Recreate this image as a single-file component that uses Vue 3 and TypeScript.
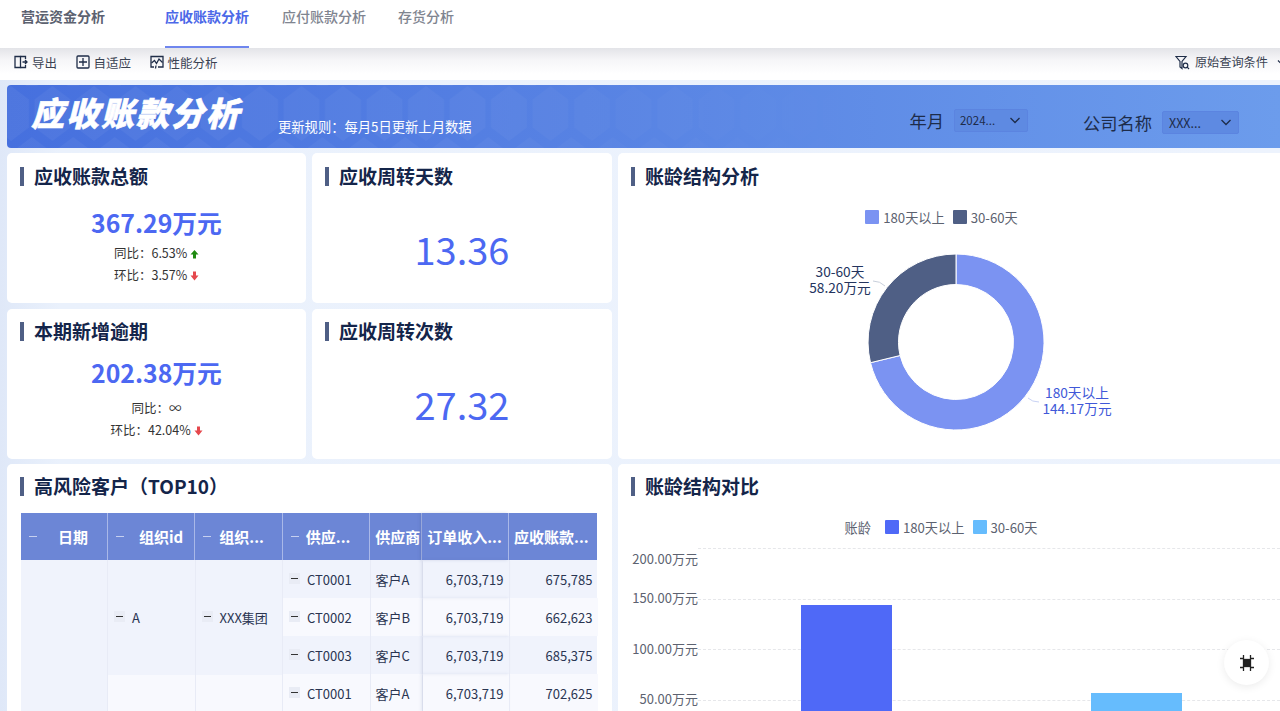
<script setup lang="ts">
interface Row { id: number; sup: string; cust: string; rev: string; ar: string; alt: boolean }
const rows: Row[] = [
  { id: 0, sup: 'CT0001', cust: '客户A', rev: '6,703,719', ar: '675,785', alt: false },
  { id: 1, sup: 'CT0002', cust: '客户B', rev: '6,703,719', ar: '662,623', alt: true },
  { id: 2, sup: 'CT0003', cust: '客户C', rev: '6,703,719', ar: '685,375', alt: false },
  { id: 3, sup: 'CT0001', cust: '客户A', rev: '6,703,719', ar: '702,625', alt: true },
]
const heads = ['组织id', '组织...', '供应...']
const ticks = ['200.00万元', '150.00万元', '100.00万元', '50.00万元']
</script>

<template>
  <div class="page">
    <header class="nav">
      <div class="brand">营运资金分析</div>
      <div class="tab active">应收账款分析</div>
      <div class="tab">应付账款分析</div>
      <div class="tab">存货分析</div>
    </header>

    <div class="toolbar">
      <div class="tool">
        <svg width="14" height="14" viewBox="0 0 14 14" fill="none" stroke="#1f2d48" stroke-width="1.3"><path d="M1 1.500h5.500v11H1z"/><path d="M6.500 1.500h5v2.500M6.500 12.500h5V10"/><path d="M8.500 7H13M11 5l2 2-2 2"/></svg>
        <span>导出</span>
      </div>
      <div class="tool">
        <svg width="14" height="14" viewBox="0 0 14 14" fill="none" stroke="#1f2d48" stroke-width="1.3"><rect x="1" y="1" width="12" height="12" rx="1"/><path d="M7 3v8M3 7h8"/></svg>
        <span>自适应</span>
      </div>
      <div class="tool">
        <svg width="14" height="14" viewBox="0 0 14 14" fill="none" stroke="#1f2d48" stroke-width="1.3"><path d="M4 12H1V1.500h12V12H8"/><path d="M1.500 8l3-2.500 2 3 2.500-4.500 3.500 3.500M6 10.500l-.5 3"/></svg>
        <span>性能分析</span>
      </div>
      <div class="tool query">
        <svg width="15" height="15" viewBox="0 0 15 15" fill="none" stroke="#1f2d48" stroke-width="1.200"><path d="M1 1.500h10L7 6.500v7L5 12V6.500z"/><circle cx="10.500" cy="10.500" r="2.300"/><path d="M12.200 12.200l1.800 1.800"/></svg>
        <span>原始查询条件</span>
        <svg class="more" width="10" height="10" viewBox="0 0 10 10" fill="none" stroke="#1f2d48" stroke-width="1.200"><path d="M2 3.500l3 3 3-3"/></svg>
      </div>
    </div>

    <main class="board">
      <section class="banner">
        <svg class="hexes" width="1273" height="63" viewBox="0 0 1273 63" aria-hidden="true">
          <defs>
            <pattern id="hex" width="41.500" height="102" patternUnits="userSpaceOnUse" x="-16.750" y="1">
              <path d="M20.750 0l18 13.500v28l-18 13.500-18-13.500v-28z" fill="#fff"/>
              <path d="M0 51l18 13.500v28L0 106l-18-13.500v-28zM41.500 51l18 13.500v28L41.500 106l-18-13.500v-28z" fill="#fff"/>
            </pattern>
            <linearGradient id="fade" x1="0" x2="1" y1="0" y2="0">
              <stop offset="0" stop-color="#fff" stop-opacity="0.05"/>
              <stop offset="0.55" stop-color="#fff" stop-opacity="0.035"/>
              <stop offset="1" stop-color="#fff" stop-opacity="0"/>
            </linearGradient>
            <mask id="fadeMask">
              <rect width="900" height="63" fill="url(#fade)"/>
            </mask>
          </defs>
          <rect width="900" height="63" fill="url(#hex)" mask="url(#fadeMask)"/>
        </svg>
        <div class="banner-title">应收账款分析</div>
        <div class="banner-rule">更新规则：每月5日更新上月数据</div>
        <div class="filters">
          <label class="filter first">
            <span class="filter-label">年月</span>
            <span class="select small"><span>2024...</span>
              <svg width="12" height="12" viewBox="0 0 12 12" fill="none" stroke="#1d2c4a" stroke-width="1.300"><path d="M1.500 4L6 8.500 10.500 4"/></svg>
            </span>
          </label>
          <label class="filter second">
            <span class="filter-label">公司名称</span>
            <span class="select"><span>XXX...</span>
              <svg width="12" height="12" viewBox="0 0 12 12" fill="none" stroke="#1d2c4a" stroke-width="1.300"><path d="M1.500 4L6 8.500 10.500 4"/></svg>
            </span>
          </label>
        </div>
      </section>

      <section class="card kpi a1">
        <h2 class="title">应收账款总额</h2>
        <div class="amount first">367.29万元</div>
        <div class="delta d1">同比：6.53%
          <svg class="arrow" width="9" height="10" viewBox="0 0 9 10"><path d="M4.500 1l4 4.500H6v4H3v-4H.5z" fill="#1f8a10"/></svg>
        </div>
        <div class="delta">环比：3.57%
          <svg class="arrow" width="9" height="10" viewBox="0 0 9 10"><path d="M4.500 9.500l4-5H6v-4H3v4H.5z" fill="#e5484d"/></svg>
        </div>
      </section>

      <section class="card kpi a2">
        <h2 class="title">应收周转天数</h2>
        <div class="bignum">13.36</div>
      </section>

      <section class="card pie">
        <h2 class="title">账龄结构分析</h2>
        <div class="legend pie-legend">
          <span class="swatch sw-pie1"></span><span>180天以上</span>
          <span class="swatch s2 sw-pie2"></span><span>30-60天</span>
        </div>
        <svg class="donut" width="662" height="260" viewBox="0 0 662 260">
          <g transform="translate(338 135)">
            <path d="M0 -88A88 88 0 1 1 -85.500 20.700L-55.900 13.500A57.500 57.500 0 1 0 0 -57.500Z" fill="#7b93f2" stroke="#fff" stroke-width="1"/>
            <path d="M-85.500 20.700A88 88 0 0 1 0 -88L0 -57.500A57.500 57.500 0 0 0 -55.900 13.500Z" fill="#4f5f85" stroke="#fff" stroke-width="1"/>
          </g>
          <path d="M255 74q7 0 12 5" fill="none" stroke="#c8cfdb"/>
          <path d="M410 191q4 4 11 4" fill="none" stroke="#c8d2f4"/>
          <text class="pl dark" x="222" y="70" text-anchor="middle">30-60天</text>
          <text class="pl dark" x="222" y="86" text-anchor="middle">58.20万元</text>
          <text class="pl blue" x="459" y="191" text-anchor="middle">180天以上</text>
          <text class="pl blue" x="459" y="207" text-anchor="middle">144.17万元</text>
        </svg>
      </section>

      <section class="card kpi b1">
        <h2 class="title">本期新增逾期</h2>
        <div class="amount">202.38万元</div>
        <div class="delta d2">同比：∞</div>
        <div class="delta">环比：42.04%
          <svg class="arrow" width="9" height="10" viewBox="0 0 9 10"><path d="M4.500 9.500l4-5H6v-4H3v4H.5z" fill="#e5484d"/></svg>
        </div>
      </section>

      <section class="card kpi b2">
        <h2 class="title">应收周转次数</h2>
        <div class="bignum">27.32</div>
      </section>

      <section class="card risk">
        <h2 class="title">高风险客户（TOP10）</h2>
        <div class="tbl">
          <div class="thead">
            <div class="th c1"><i class="fold f1"></i><b>日期</b></div>
            <div v-for="(h, i) in heads" :key="h" class="th" :class="'c' + (i + 2)"><i class="fold" :class="'f' + (i + 2)"></i><b>{{ h }}</b></div>
            <div class="th c5 plain"><b>供应商</b></div>
            <div class="th c6 plain"><b>订单收入...</b></div>
            <div class="th c7 plain"><b>应收账款...</b></div>
          </div>
          <div class="tbody">
            <div class="merged date"></div>
            <div class="merged org"><span class="mini"><i></i></span>A</div>
            <div class="merged group"><span class="mini"><i></i></span>XXX集团</div>
            <div class="merged org lower"></div>
            <div class="merged group lower"></div>
            <div class="cols">
              <div v-for="r in rows" :key="r.id" class="row" :class="{ alt: r.alt }">
                <div class="td c4"><span class="mini"><i></i></span>{{ r.sup }}</div>
                <div class="td c5">{{ r.cust }}</div>
                <div class="td c6 num">{{ r.rev }}</div>
                <div class="td c7 num">{{ r.ar }}</div>
              </div>
            </div>
          </div>
        </div>
      </section>

      <section class="card compare">
        <h2 class="title">账龄结构对比</h2>
        <div class="legend bar-legend">
          <span class="legend-name">账龄</span>
          <span class="swatch sw-bar1"></span><span>180天以上</span>
          <span class="swatch s3 sw-bar2"></span><span>30-60天</span>
        </div>
        <div class="plot">
          <div class="axis">
            <div v-for="t in ticks" :key="t" class="tick">{{ t }}</div>
          </div>
          <div class="area">
            <div v-for="n in 4" :key="n" class="gridline"></div>
            <div class="bar bar1"></div>
            <div class="bar bar2"></div>
          </div>
        </div>
      </section>
    </main>

    <button class="fab" type="button" aria-label="全屏">
      <svg width="20" height="20" viewBox="0 0 20 20" fill="none" stroke="#222" stroke-width="1.300"><rect x="6.500" y="6.500" width="7" height="7" fill="#222"/><path d="M6.500 2v3.500H3M13.500 2v3.500H17M6.500 18v-3.500H3M13.500 18v-3.500H17"/></svg>
    </button>
  </div>
</template>

<style>
html, body { margin: 0; overflow: hidden; background: #fff; }
</style>

<style scoped>
.page { position: relative; width: 1280px; height: 711px; overflow: hidden; font-family: "Noto Sans CJK SC", "Noto Sans", sans-serif; color: #1a2a4a; background: #fff; }
.nav { height: 48px; display: flex; background: #fff; }
.brand { width: 165px; padding-left: 21px; box-sizing: border-box; font-size: 14px; font-weight: 700; color: #5c6270; line-height: 32px; }
.tab { font-size: 14px; font-weight: 500; color: #7f8590; line-height: 32px; margin-right: 32px; height: 48px; box-sizing: border-box; }
.tab.active { color: #4c68e8; font-weight: 700; border-bottom: 2px solid #6f86ee; margin-right: 33px; }
.toolbar { height: 32px; box-sizing: border-box; padding: 0 0 4px 14px; display: flex; align-items: center; gap: 18.500px; font-size: 12.500px; color: #3a4252; background: linear-gradient(#e3e4e8 0, #f6f6f8 12px, #fff 26px); }
.tool { display: flex; align-items: center; gap: 4px; }
.query { margin-left: auto; margin-right: -6px; font-size: 12.200px; gap: 5px; }
.more { margin-left: 3px; }
.board { display: grid; grid-template-columns: 299px 300px 662px; grid-template-rows: 63px 150px 151px 260px; gap: 5px 6px; padding: 5px 0 0 7px; height: 631px; box-sizing: border-box; background: linear-gradient(90deg, #dfe8f8 0, #eaf1fc 60px, #edf3fd 100%); }
.banner { grid-column: 1 / -1; position: relative; display: flex; width: 1273px; overflow: hidden; border-radius: 4px 0 0 4px; background: linear-gradient(90deg, #4670de 0, #5782e3 45%, #6c9cec 100%); }
.hexes { position: absolute; left: 0; top: 0; }
.banner-title { position: relative; width: 271px; padding: 6px 0 0 24px; box-sizing: border-box; color: #fff; font-size: 33px; line-height: 42px; font-weight: 900; font-style: italic; letter-spacing: 2px; white-space: nowrap; -webkit-text-stroke: 0.6px #fff; }
.banner-rule { position: relative; font-size: 13.300px; color: #fff; padding-top: 32px; line-height: 20px; }
.filters { position: relative; margin-left: auto; display: flex; }
.filter { display: flex; align-items: center; gap: 10px; }
.filter.first { height: 70px; margin-right: 55px; }
.filter.second { height: 74px; }
.filter-label { font-size: 17.250px; color: #1d2c4a; }
.select { display: flex; align-items: center; justify-content: space-between; width: 77px; height: 23px; box-sizing: border-box; padding: 0 6px; border: 1px solid #5b84e0; background: #5e8ae2; border-radius: 2px; font-size: 12.500px; color: #1d2c4a; margin-right: 41px; }
.select.small { font-size: 11.500px; width: 74px; margin-right: 0; padding-left: 5px; }
.card { background: #fff; border-radius: 5px; overflow: hidden; }
.title { margin: 0; display: flex; align-items: center; height: 46px; padding-left: 14px; font-size: 19px; font-weight: 700; color: #14254a; line-height: 46px; }
.title::before { content: ""; width: 4px; height: 19px; background: #4f5f85; margin-right: 10px; margin-left: -1px; }
.kpi { text-align: center; }
.amount { font-size: 24.800px; font-weight: 700; color: #4c68f2; line-height: 32px; margin-top: 3px; }
.amount.first { margin-top: 7px; }
.delta { font-size: 12.500px; color: #333; line-height: 22px; height: 22px; }
.d1 { margin-top: 4px; }
.d2 { margin-top: 9px; }
.arrow { vertical-align: -1px; }
.bignum { font-size: 38px; color: #4c68f2; line-height: 50px; margin-top: 25px; }
.a1 { grid-column: 1; grid-row: 2; }
.a2 { grid-column: 2; grid-row: 2; }
.b1 { grid-column: 1; grid-row: 3; margin-top: 1px; }
.b2 { grid-column: 2; grid-row: 3; margin-top: 1px; }
.b1 .title, .b2 .title, .risk .title, .compare .title { height: 44px; }
.b2 .bignum { margin-top: 26px; }
.pie { grid-column: 3; grid-row: 2 / 4; border-radius: 5px 0 0 5px; }
.risk { grid-column: 1 / 3; grid-row: 4; }
.compare { grid-column: 3; grid-row: 4; border-radius: 5px 0 0 5px; }
.legend { display: flex; align-items: center; justify-content: center; font-size: 13.200px; color: #5c6270; }
.swatch { width: 14px; height: 14px; border-radius: 1px; margin-right: 4px; }
.sw-pie1 { background: #7b93f2; }
.sw-pie2 { background: #4f5f85; }
.sw-bar1 { background: #4f69f7; }
.sw-bar2 { background: #66bcfd; }
.pie-legend { height: 20px; margin-top: 8px; padding-right: 15px; }
.s2 { margin-left: 8px; }
.s3 { margin-left: 9px; margin-right: 3px; }
.donut { display: block; margin-top: -20px; }
.pl { font-size: 13.700px; font-family: "Noto Sans CJK SC", "Noto Sans", sans-serif; }
.dark { fill: #24345e; }
.blue { fill: #4058d8; }
.tbl { margin: 5px 0 0 14px; width: 576px; }
.thead { display: flex; height: 47px; background: #6c86d6; }
.th { display: flex; align-items: center; color: #fff; font-size: 15px; box-sizing: border-box; height: 47px; border-right: 1px solid #a9b8e8; white-space: nowrap; overflow: hidden; padding-left: 8px; }
.th b { font-weight: 700; }
.th.c7 { border-right: 0; }
.th.plain { padding-left: 5px; }
.th.c6 { box-shadow: -2px 0 3px rgba(60, 80, 140, 0.18); }
.c1 { width: 87px; }
.c2, .c3, .c4 { width: 87.500px; }
.c5 { width: 52px; }
.c6 { width: 87px; }
.c7 { width: 88px; }
.fold { width: 8px; height: 1px; background: #c6d0f0; flex: none; }
.f1 { margin-right: 21px; }
.f2 { margin-right: 15px; }
.f3 { margin-right: 8px; }
.f4 { margin-right: 7px; }
.tbody { display: grid; grid-template-columns: 87px 87.500px 87.500px 1fr; grid-template-rows: 115px 38px; height: 160px; background: #f0f3fc; font-size: 13px; color: #2a3552; }
.merged { display: flex; align-items: center; box-sizing: border-box; padding-left: 6px; border-right: 1px solid #e8ebf6; }
.date { grid-column: 1; grid-row: 1 / 3; }
.org { grid-column: 2; grid-row: 1; }
.group { grid-column: 3; grid-row: 1; }
.org.lower { grid-column: 2; grid-row: 2; background: #f8f9fe; }
.group.lower { grid-column: 3; grid-row: 2; background: #f8f9fe; }
.cols { grid-column: 4; grid-row: 1 / 3; }
.row { display: flex; height: 38px; }
.row.alt { background: #f8f9fe; }
.td { display: flex; align-items: center; box-sizing: border-box; padding-left: 6px; border-right: 1px solid #e8ebf6; white-space: nowrap; }
.td.c5 { padding-left: 5px; }
.td.c6 { box-shadow: -2px 0 3px rgba(60, 80, 140, 0.1); }
.td.c7 { border-right: 0; }
.num { justify-content: flex-end; padding: 0 5px 0 0; }
.mini { display: inline-flex; align-items: center; justify-content: center; width: 11px; height: 11px; background: #e9ecf5; margin-right: 7px; position: relative; top: -1px; }
.mini i { width: 7px; height: 1px; background: #333; }
.bar-legend { height: 20px; margin-top: 9px; padding-right: 16px; font-size: 13.200px; }
.legend-name { margin-right: 14px; }
.plot { display: flex; margin-top: 10px; }
.axis { width: 80px; flex: none; text-align: right; font-size: 13px; color: #5c6270; }
.tick { height: 50.670px; line-height: 20px; }
.tick:first-child { height: 41px; padding-top: 2px; box-sizing: border-box; }
.area { position: relative; flex: 1; padding-top: 1px; }
.gridline { height: 50.670px; box-sizing: border-box; border-top: 1px dashed #e6e7ea; }
.bar { position: absolute; }
.bar1 { left: 103px; top: 58px; width: 91px; height: 200px; background: #4f69f7; }
.bar2 { left: 393px; top: 146px; width: 91px; height: 100px; background: #66bcfd; }
.fab { position: absolute; left: 1224px; top: 640px; width: 45px; height: 45px; border: 0; border-radius: 50%; background: #fff; box-shadow: 0 2px 8px rgba(0, 0, 0, 0.08); display: flex; align-items: center; justify-content: center; padding: 0; }
</style>
